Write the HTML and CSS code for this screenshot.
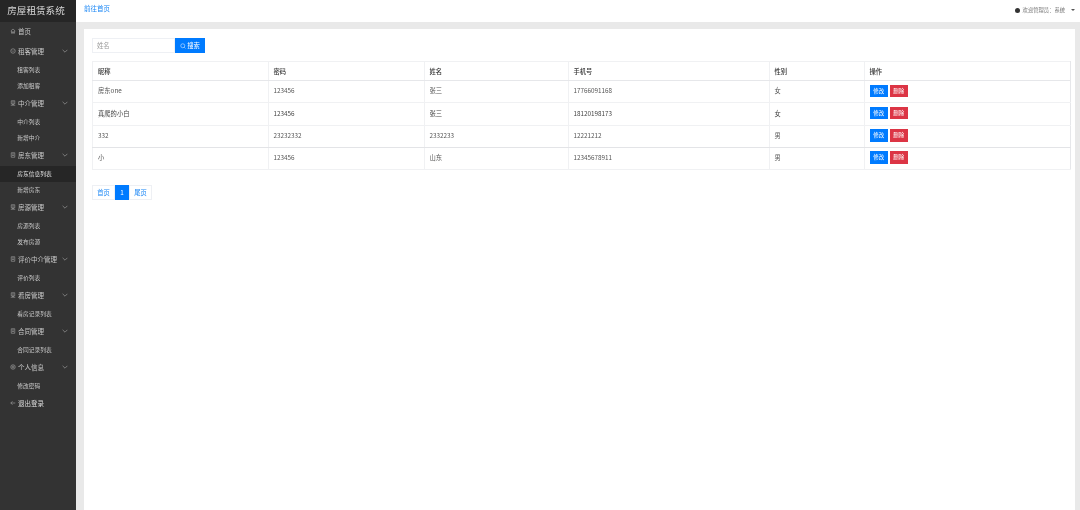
FILE: index.html
```html
<!DOCTYPE html>
<html lang="zh">
<head>
<meta charset="utf-8">
<title>房屋租赁系统</title>
<link rel="stylesheet" href="styles.css">
</head>
<body>
<div class="app">
  <aside class="sidebar">
    <div class="brand">房屋租赁系统</div>
    <nav class="menu">
      <a class="item top"><svg class="ico" viewBox="0 0 12 12"><path d="M1.5 6 6 2l4.5 4M3 5.5v5h2v-3h2v3h2v-5"/></svg>首页</a>
      <div class="block">
        <a class="item group"><svg class="ico" viewBox="0 0 12 12"><circle cx="6" cy="6" r="4.5"/><path d="M4 5l2 2 2-2"/></svg>租客管理<svg class="chev" viewBox="0 0 10 10"><path d="M1 3l4 4 4-4"/></svg></a>
        <div class="subs"><a class="item sub">租客列表</a><a class="item sub">添加租客</a></div>
      </div>
      <div class="block">
        <a class="item group"><svg class="ico" viewBox="0 0 12 12"><path d="M2.5 1.5h7v6h-7zM1.5 10.5h9M4 4h4M4 9h4"/></svg>中介管理<svg class="chev" viewBox="0 0 10 10"><path d="M1 3l4 4 4-4"/></svg></a>
        <div class="subs"><a class="item sub">中介列表</a><a class="item sub">新增中介</a></div>
      </div>
      <div class="block">
        <a class="item group"><svg class="ico" viewBox="0 0 12 12"><path d="M2.5 1.5h7v9h-7zM4 4h4M4 7h4"/></svg>房东管理<svg class="chev" viewBox="0 0 10 10"><path d="M1 3l4 4 4-4"/></svg></a>
        <div class="subs"><a class="item sub active">房东信息列表</a><a class="item sub">新增房东</a></div>
      </div>
      <div class="block">
        <a class="item group"><svg class="ico" viewBox="0 0 12 12"><path d="M2.5 1.5h7v6h-7zM1.5 10.5h9M4 4h4M4 9h4"/></svg>房源管理<svg class="chev" viewBox="0 0 10 10"><path d="M1 3l4 4 4-4"/></svg></a>
        <div class="subs"><a class="item sub">房源列表</a><a class="item sub">发布房源</a></div>
      </div>
      <div class="block">
        <a class="item group"><svg class="ico" viewBox="0 0 12 12"><path d="M2.5 1.5h7v9h-7zM4 4h4M4 7h4"/></svg>评价中介管理<svg class="chev" viewBox="0 0 10 10"><path d="M1 3l4 4 4-4"/></svg></a>
        <div class="subs"><a class="item sub">评价列表</a></div>
      </div>
      <div class="block">
        <a class="item group"><svg class="ico" viewBox="0 0 12 12"><path d="M2.5 1.5h7v6h-7zM1.5 10.5h9M4 4h4M4 9h4"/></svg>看房管理<svg class="chev" viewBox="0 0 10 10"><path d="M1 3l4 4 4-4"/></svg></a>
        <div class="subs"><a class="item sub">看房记录列表</a></div>
      </div>
      <div class="block">
        <a class="item group"><svg class="ico" viewBox="0 0 12 12"><path d="M2.5 1.5h7v9h-7zM4 4h4M4 7h4"/></svg>合同管理<svg class="chev" viewBox="0 0 10 10"><path d="M1 3l4 4 4-4"/></svg></a>
        <div class="subs"><a class="item sub">合同记录列表</a></div>
      </div>
      <div class="block">
        <a class="item group"><svg class="ico" viewBox="0 0 12 12"><circle cx="6" cy="6" r="4.5"/><circle cx="6" cy="6" r="2"/></svg>个人信息<svg class="chev" viewBox="0 0 10 10"><path d="M1 3l4 4 4-4"/></svg></a>
        <div class="subs"><a class="item sub">修改密码</a></div>
      </div>
      <a class="item exit"><svg class="ico" viewBox="0 0 12 12"><path d="M10.5 6h-9M5 2.5 1.5 6 5 9.5"/></svg>退出登录</a>
    </nav>
  </aside>
  <main class="main">
    <header class="topbar">
      <a class="home-link">前往首页</a>
      <div class="user"><span class="avatar"></span>欢迎管理员：系统<span class="caret"></span></div>
    </header>
    <section class="card">
      <form class="search">
        <input class="search-input" placeholder="姓名">
        <button class="search-btn" type="button"><svg class="search-ico" viewBox="0 0 12 12"><circle cx="5.5" cy="5.5" r="4"/><path d="M8.5 8.5l2.5 2.5"/></svg>搜索</button>
      </form>
      <table class="grid">
        <colgroup>
          <col class="c1"><col class="c2"><col class="c3"><col class="c4"><col class="c5"><col class="c6">
        </colgroup>
        <thead>
          <tr><th>昵称</th><th>密码</th><th>姓名</th><th>手机号</th><th>性别</th><th>操作</th></tr>
        </thead>
        <tbody>
          <tr><td>房东one</td><td>123456</td><td>张三</td><td>17766091168</td><td>女</td><td><span class="btn edit">修改</span><span class="btn del">删除</span></td></tr>
          <tr><td>真爬的小白</td><td>123456</td><td>张三</td><td>18120198173</td><td>女</td><td><span class="btn edit">修改</span><span class="btn del">删除</span></td></tr>
          <tr><td>332</td><td>23232332</td><td>2332233</td><td>12221212</td><td>男</td><td><span class="btn edit">修改</span><span class="btn del">删除</span></td></tr>
          <tr><td>小</td><td>123456</td><td>山东</td><td>12345678911</td><td>男</td><td><span class="btn edit">修改</span><span class="btn del">删除</span></td></tr>
        </tbody>
      </table>
      <div class="pager">
        <a class="page">首页</a><a class="page current">1</a><a class="page">尾页</a>
      </div>
    </section>
  </main>
</div>
</body>
</html>
```

FILE: styles.css
```css
* { box-sizing: border-box; }
html, body { margin: 0; height: 100%; overflow: hidden; }
body {
  font-family: "Noto Sans CJK SC", "Liberation Sans", sans-serif;
  font-size: 6.3px;
  color: #555;
  background: #fff;
}
.app { display: flex; height: 510px; filter: blur(0.35px); }

.sidebar { width: 76px; flex: none; background: #333; color: #c8c8c8; }
.brand {
  height: 22px;
  line-height: 21px;
  padding-right: 4px;
  background: #262626;
  color: #d8d8d8;
  font-size: 9.6px;
  text-align: center;
  white-space: nowrap;
}
.menu { display: flex; flex-direction: column; }
.item { display: flex; align-items: center; white-space: nowrap; }
.top, .group, .exit { height: 18px; padding-left: 10px; font-size: 6.5px; }
.top { margin-bottom: 2px; }
.exit { color: #ddd; }
.subs { padding-top: 2px; }
.sub { height: 16px; padding: 0 0 2px 17.3px; font-size: 5.75px; }
.sub.active { background: #262626; color: #e0e0e0; }
.ico { width: 6px; height: 6px; margin-right: 2px; fill: none; stroke: #bbb; stroke-width: 1; flex: none; }
.chev { width: 6px; height: 6px; margin-left: auto; margin-right: 8px; fill: none; stroke: #aaa; stroke-width: 1; flex: none; }

.main { flex: 1; display: flex; flex-direction: column; background: #e9e9e9; min-width: 0; }
.topbar {
  height: 22px;
  flex: none;
  background: #fff;
  display: flex;
  align-items: flex-start;
  justify-content: space-between;
  padding: 3.5px 5px 0 8px;
}
.home-link { color: #1a86f5; font-size: 6.5px; line-height: 9px; }
.user { display: flex; align-items: center; font-size: 5.3px; color: #777; margin-top: 2px; line-height: 9px; }
.avatar { width: 5px; height: 5px; border-radius: 50%; background: #333; margin-right: 3px; }
.caret { margin-left: 6px; border: 2px solid transparent; border-top-color: #555; border-bottom-width: 0; }

.card { flex: 1; background: #fff; margin: 7px 5px 0 8px; padding: 9px 8px; }
.search { display: flex; height: 15px; }
.search-input {
  width: 83px;
  height: 15px;
  border: 1px solid #eef0f4;
  padding: 0 4px;
  font: inherit;
  outline: none;
}
.search-input::placeholder { color: #999; }
.search-btn {
  width: 30px;
  height: 15px;
  border: 0;
  padding: 0;
  background: #007bff;
  color: #fff;
  font: inherit;
  display: flex;
  align-items: center;
  justify-content: center;
}
.search-ico { width: 6px; height: 6px; margin-right: 1px; fill: none; stroke: #fff; stroke-width: 1; }

.grid {
  width: 977.5px;
  margin-top: 8px;
  border-collapse: collapse;
  table-layout: fixed;
  border: 1px solid #f0f1f3;
  border-bottom: 1px solid #dfe0e4;
  border-right: 1px solid #e6e7ea;
}
.c1 { width: 175.5px; } .c2 { width: 156px; } .c3 { width: 144px; }
.c4 { width: 201px; } .c5 { width: 95px; } .c6 { width: 206px; }
.grid th, .grid td {
  border-left: 1px solid #f0f1f3;
  padding: 0 0 0 5px;
  text-align: left;
  font-weight: normal;
}
.grid th { height: 19px; color: #333; font-weight: 500; border-bottom: 1px solid #e6e7ea; }
.grid td { height: 22.25px; padding-bottom: 1.5px; border-bottom: 1px solid #f0f1f3; }
.grid tbody tr:nth-child(3) td { border-bottom-color: #e3e4e7; }
.grid tbody tr:nth-child(2) td { color: #444; }
.btn {
  display: inline-block;
  width: 18.5px;
  height: 12.5px;
  line-height: 12.5px;
  text-align: center;
  color: #fff;
  font-size: 5.5px;
  vertical-align: middle;
}
.edit { background: #007bff; margin-right: 1.5px; }
.del { background: #dc3545; }

.pager { display: flex; margin-top: 14.5px; height: 15px; }
.page {
  display: flex;
  align-items: center;
  justify-content: center;
  width: 23px;
  border: 1px solid #eef0f4;
  color: #1a86f5;
}
.page.current { width: 14px; background: #007bff; border-color: #007bff; color: #fff; }
```
